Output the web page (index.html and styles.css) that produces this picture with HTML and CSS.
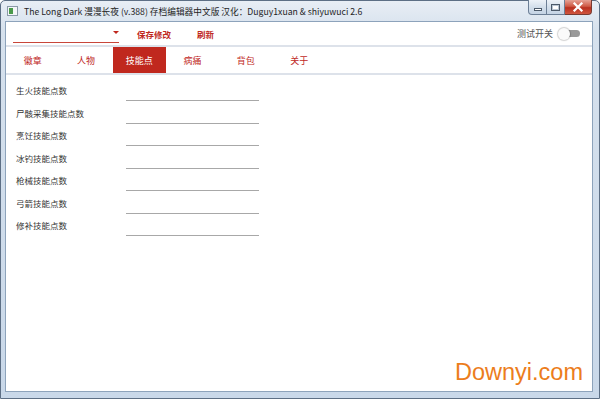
FILE: index.html
```html
<!DOCTYPE html>
<html>
<head>
<meta charset="utf-8">
<link rel="stylesheet" href="styles.css">
</head>
<body>
<div class="window">
  <div class="titlebar">
    <div class="appicon"><span class="appicon-in"></span></div>
    <div class="title">The Long Dark 漫漫长夜 (v.388) 存档编辑器中文版 汉化：Duguy1xuan &amp; shiyuwuci 2.6</div>
    <div class="controls">
      <div class="ctl min"><span class="min-glyph"></span></div>
      <div class="ctl max"><span class="max-glyph"></span></div>
      <div class="ctl close">
        <svg width="12" height="10" viewBox="0 0 12 10"><path d="M2.5 1.5 L9.5 8.5 M9.5 1.5 L2.5 8.5" stroke="#fff" stroke-width="2.2" stroke-linecap="square"/></svg>
      </div>
    </div>
  </div>
  <div class="client">
    <div class="toolbar">
      <div class="combo"><span class="arrow"></span></div>
      <span class="btn">保存修改</span>
      <span class="btn">刷新</span>
      <div class="spacer"></div>
      <span class="test-label">测试开关</span>
      <div class="toggle"><span class="track"></span><span class="knob"></span></div>
    </div>
    <div class="tabs">
      <div class="tab">徽章</div>
      <div class="tab">人物</div>
      <div class="tab active">技能点</div>
      <div class="tab">病痛</div>
      <div class="tab">背包</div>
      <div class="tab">关于</div>
    </div>
    <div class="form">
      <div class="row"><span class="label">生火技能点数</span><span class="input"></span></div>
      <div class="row"><span class="label">尸骸采集技能点数</span><span class="input"></span></div>
      <div class="row"><span class="label">烹饪技能点数</span><span class="input"></span></div>
      <div class="row"><span class="label">冰钓技能点数</span><span class="input"></span></div>
      <div class="row"><span class="label">枪械技能点数</span><span class="input"></span></div>
      <div class="row"><span class="label">弓箭技能点数</span><span class="input"></span></div>
      <div class="row"><span class="label">修补技能点数</span><span class="input"></span></div>
    </div>
    <div class="watermark">Downyi.com</div>
  </div>
</div>
</body>
</html>
```

FILE: styles.css
```css
* { box-sizing: border-box; }
html, body { margin: 0; padding: 0; }
body {
  width: 600px;
  height: 399px;
  overflow: hidden;
  font-family: "Noto Sans CJK SC", "Liberation Sans", sans-serif;
  background: #fff;
}
.window {
  width: 600px;
  height: 399px;
  display: flex;
  flex-direction: column;
  background: linear-gradient(#e8eef5, #d6e1ed 30px, #c9d8e9);
  border: 1px solid #5d6f85;
  border-radius: 5px 5px 0 0;
  padding: 0 6px 6px 4px;
}
.titlebar {
  height: 20px;
  display: flex;
  align-items: center;
  flex-shrink: 0;
  position: relative;
}
.appicon {
  width: 11px;
  height: 10px;
  border: 1px solid #8a9aa8;
  background: #f4f6f8;
  margin-left: 2px;
  margin-right: 6px;
  display: flex;
  align-items: center;
  padding-left: 1px;
}
.appicon-in {
  width: 4px;
  height: 6px;
  background: #4a9a4a;
}
.title {
  font-size: 8.7px;
  color: #1e1e1e;
  white-space: nowrap;
}
.controls {
  position: absolute;
  right: 1px;
  top: -1px;
  display: flex;
}
.ctl {
  height: 15px;
  border: 1px solid #6c7f96;
  border-top: none;
  display: flex;
  align-items: center;
  justify-content: center;
  background: linear-gradient(#edf2f8, #d3dfeb 50%, #c5d4e5);
}
.min { width: 19px; border-radius: 0 0 0 4px; }
.max { width: 18px; border-left: none; }
.close {
  width: 27px;
  border-left: none;
  border-radius: 0 0 4px 0;
  background: linear-gradient(#e5a295, #cf5a45 45%, #b9301f 55%, #d0563f);
  border-color: #7a3a30;
}
.min-glyph { width: 8px; height: 3px; background: #fff; border: 1px solid #4c5a6a; margin-top: 5px; }
.max-glyph { width: 9px; height: 7px; border: 1px solid #4c5a6a; background: #fff; box-shadow: inset 0 0 0 1px #b9c6d4; }
.client {
  flex: 1;
  background: #fff;
  border: 1px solid #8da3bb;
  display: flex;
  flex-direction: column;
  position: relative;
}
.toolbar {
  height: 25px;
  display: flex;
  align-items: center;
  padding: 0 12px 0 7px;
  border-bottom: 2px solid #dde2ea;
  flex-shrink: 0;
}
.combo {
  width: 106px;
  height: 19px;
  border-bottom: 1px solid #c8463a;
  position: relative;
  margin-right: 18px;
}
.arrow {
  position: absolute;
  right: 0;
  top: 7px;
  width: 0;
  height: 0;
  border-left: 3px solid transparent;
  border-right: 3px solid transparent;
  border-top: 3px solid #c0281e;
}
.btn {
  font-size: 8.5px;
  color: #c0281e;
  margin-right: 26px;
  font-weight: bold;
}
.spacer { flex: 1; }
.test-label {
  font-size: 9px;
  color: #555;
  margin-right: 5px;
}
.toggle {
  position: relative;
  width: 22px;
  height: 12px;
  display: flex;
  align-items: center;
}
.track {
  position: absolute;
  left: 4px;
  right: 0;
  height: 7px;
  border-radius: 4px;
  background: #9a9a9a;
}
.knob {
  position: absolute;
  left: 0;
  top: 0;
  width: 12px;
  height: 12px;
  border-radius: 50%;
  background: #fafafa;
  box-shadow: 0 0 1px 1px rgba(0,0,0,0.18);
}
.tabs {
  display: flex;
  height: 28px;
  border-bottom: 2px solid #dde2ea;
  flex-shrink: 0;
}
.tab {
  width: 53.3px;
  display: flex;
  align-items: center;
  justify-content: center;
  font-size: 9px;
  color: #c0281e;
}
.tab.active {
  background: #c0281e;
  color: #fff;
}
.form {
  display: flex;
  flex-direction: column;
  padding: 8px 0 0 10px;
}
.row {
  height: 22.5px;
  display: flex;
  align-items: flex-start;
}
.label {
  width: 110px;
  font-size: 8.5px;
  color: #333;
  line-height: 12px;
  padding-top: 1px;
}
.input {
  width: 133px;
  height: 18px;
  border-bottom: 1px solid #a8a8a8;
}
.watermark {
  position: absolute;
  right: 9px;
  bottom: 5px;
  font-family: "Liberation Sans", "Open Sans", sans-serif;
  font-size: 23.5px;
  color: #ec7d1c;
}
```
